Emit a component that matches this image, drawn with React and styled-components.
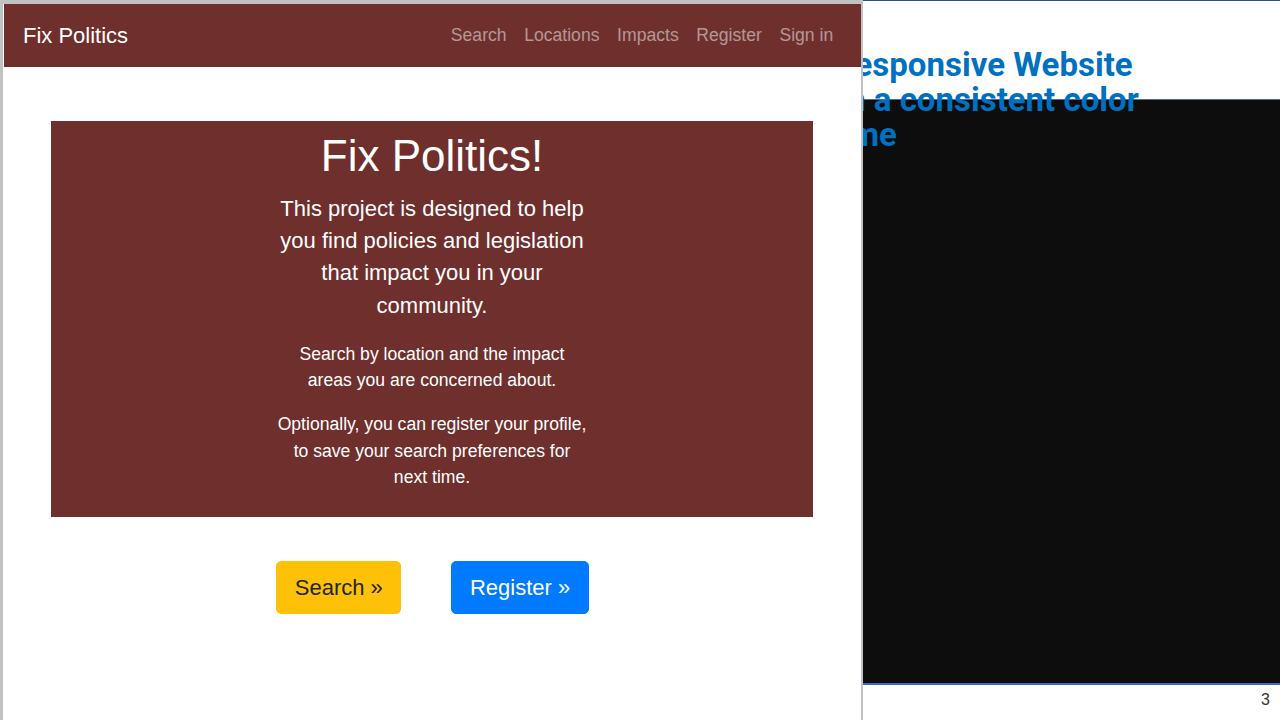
import React from "react"
import styled, { createGlobalStyle } from "styled-components"

const GlobalStyle = createGlobalStyle`
  html, body {
    margin: 0;
    padding: 0;
    background: #ffffff;
  }
  body {
    font-family: "Liberation Sans", Arial, sans-serif;
  }
`

const maroon = "#6e2f2d"

const Desktop = styled.div`
  position: relative;
  width: 1280px;
  height: 720px;
  overflow: hidden;
  background: #ffffff;
`

const Slide = styled.div`
  position: relative;
  height: 720px;
  border-top: 1px solid #2f528f;
  box-sizing: border-box;
  padding-top: 98px;
  display: flex;
  flex-direction: column;
`

const SlideImage = styled.div`
  margin-left: 700px;
  height: 583px;
  background: #0d0d0d;
  border-top: 1px solid #4a6aa8;
  border-bottom: 2px solid #3c68c0;
`

const SlideTitle = styled.h2`
  position: absolute;
  left: 803px;
  top: 46px;
  width: 380px;
  margin: 0;
  font-family: Roboto, "Noto Sans", sans-serif;
  font-weight: 700;
  font-size: 33px;
  line-height: 35px;
  color: #0070c0;
  z-index: 1;
`

const PageNumber = styled.span`
  position: absolute;
  right: 10px;
  bottom: 11px;
  font-family: "Liberation Sans", Arial, sans-serif;
  font-size: 16px;
  color: #333333;
`

const BrowserWindow = styled.div`
  position: absolute;
  left: 0;
  top: 0;
  width: 863px;
  height: 740px;
  box-sizing: border-box;
  border-top: 4px solid #c2c2c2;
  border-left: 3px solid #c2c2c2;
  border-right: 2px solid #c2c2c2;
  background: #ffffff;
  z-index: 2;
`

const Navbar = styled.nav`
  height: 63px;
  margin-left: 1px;
  box-sizing: border-box;
  padding: 0 19px 0 19px;
  display: flex;
  align-items: center;
  justify-content: space-between;
  background: ${maroon};
`

const Brand = styled.a`
  font-size: 22px;
  color: #ffffff;
  text-decoration: none;
`

const NavList = styled.ul`
  display: flex;
  margin: 0;
  padding: 0;
  list-style: none;
`

const NavLink = styled.a`
  display: block;
  padding: 0 8.8px;
  font-size: 17.6px;
  color: rgba(255, 255, 255, 0.5);
  text-decoration: none;
`

const Main = styled.main`
  padding-top: 54px;
  display: flex;
  flex-direction: column;
  align-items: center;
`

const Hero = styled.section`
  width: 762px;
  box-sizing: border-box;
  padding: 9px 0 9px;
  background: ${maroon};
  color: #ffffff;
  display: flex;
  justify-content: center;
`

const HeroText = styled.div`
  width: 312px;
  text-align: center;
`

const HeroTitle = styled.h1`
  margin: 0 -100px 9.8px;
  font-size: 44px;
  font-weight: 400;
  line-height: 1.2;
`

const Lead = styled.p`
  margin: 0 0 18.6px;
  font-size: 22px;
  line-height: 32.4px;
`

const Copy = styled.p`
  margin: 0 0 17.6px;
  font-size: 17.6px;
  line-height: 26.4px;
`

const Actions = styled.div`
  margin-top: 44px;
  margin-left: 1px;
  display: flex;
  gap: 50px;
`

const Button = styled.a`
  display: inline-block;
  padding: 8.8px 17.6px;
  border: 1px solid ${(p) => p.$bg};
  border-radius: 5px;
  background: ${(p) => p.$bg};
  color: ${(p) => p.$fg};
  font-size: 22px;
  line-height: 33px;
  text-decoration: none;
`

const links = ["Search", "Locations", "Impacts", "Register", "Sign in"]

export default function App() {
  return (
    <>
      <GlobalStyle />
      <Desktop>
        <Slide>
          <SlideTitle>A Responsive Website with a consistent color theme</SlideTitle>
          <SlideImage />
          <PageNumber>3</PageNumber>
        </Slide>
        <BrowserWindow>
          <Navbar>
            <Brand href="#">Fix Politics</Brand>
            <NavList>
              {links.map((l) => (
                <li key={l}>
                  <NavLink href="#">{l}</NavLink>
                </li>
              ))}
            </NavList>
          </Navbar>
          <Main>
            <Hero>
              <HeroText>
                <HeroTitle>Fix Politics!</HeroTitle>
                <Lead>
                  This project is designed to help you find policies and
                  legislation that impact you in your community.
                </Lead>
                <Copy>
                  Search by location and the impact areas you are concerned
                  about.
                </Copy>
                <Copy>
                  Optionally, you can register your profile, to save your
                  search preferences for next time.
                </Copy>
              </HeroText>
            </Hero>
            <Actions>
              <Button href="#" $bg="#ffc107" $fg="#212529">
                Search »
              </Button>
              <Button href="#" $bg="#007bff" $fg="#ffffff">
                Register »
              </Button>
            </Actions>
          </Main>
        </BrowserWindow>
      </Desktop>
    </>
  )
}
